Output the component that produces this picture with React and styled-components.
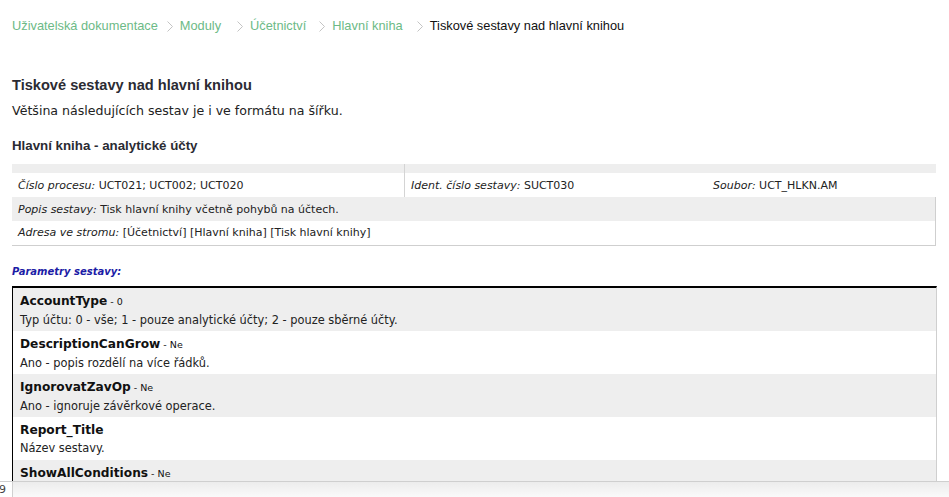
import styled, { createGlobalStyle } from "styled-components";

const GlobalStyle = createGlobalStyle`
  html, body {
    margin: 0;
    padding: 0;
    background: #fff;
  }
  body {
    font-family: "Liberation Sans", Arial, sans-serif;
    color: #222;
  }
`;

const crumbs = [
  { label: "Uživatelská dokumentace", after: 9 },
  { label: "Moduly", after: 16 },
  { label: "Účetnictví", after: 13 },
  { label: "Hlavní kniha", after: 14 },
];

const params = [
  {
    name: "AccountType",
    value: "0",
    text: "Typ účtu: 0 - vše; 1 - pouze analytické účty; 2 - pouze sběrné účty.",
  },
  { name: "DescriptionCanGrow", value: "Ne", text: "Ano - popis rozdělí na více řádků." },
  { name: "IgnorovatZavOp", value: "Ne", text: "Ano - ignoruje závěrkové operace." },
  { name: "Report_Title", value: null, text: "Název sestavy." },
  { name: "ShowAllConditions", value: "Ne", text: "" },
];

export default function App() {
  return (
    <>
      <GlobalStyle />
      <Page>
        <Breadcrumb>
          {crumbs.map((c) => (
            <Crumb key={c.label} $after={c.after}>
              <CrumbLink href="#">{c.label}</CrumbLink>
              <Chevron width="6" height="11" viewBox="0 0 6 11">
                <polyline points="0.5,0.5 5.5,5.5 0.5,10.5" fill="none" stroke="#c4c4c4" strokeWidth="1" />
              </Chevron>
            </Crumb>
          ))}
          <Current>Tiskové sestavy nad hlavní knihou</Current>
        </Breadcrumb>

        <Title>Tiskové sestavy nad hlavní knihou</Title>
        <Lead>Většina následujících sestav je i ve formátu na šířku.</Lead>
        <SubTitle>Hlavní kniha - analytické účty</SubTitle>

        <InfoTable>
          <tbody>
            <InfoRow $gray $thin>
              <InfoCell $divider />
              <InfoCell colSpan={2} />
            </InfoRow>
            <InfoRow>
              <InfoCell $divider $width={380}>
                <Label>Číslo procesu:</Label> UCT021; UCT002; UCT020
              </InfoCell>
              <InfoCell $width={290}>
                <Label>Ident. číslo sestavy:</Label> SUCT030
              </InfoCell>
              <InfoCell>
                <Label>Soubor:</Label> UCT_HLKN.AM
              </InfoCell>
            </InfoRow>
            <InfoRow $gray $bordered>
              <InfoCell colSpan={3}>
                <Label>Popis sestavy:</Label> Tisk hlavní knihy včetně pohybů na účtech.
              </InfoCell>
            </InfoRow>
            <InfoRow $bordered>
              <InfoCell colSpan={3}>
                <Label>Adresa ve stromu:</Label> [Účetnictví] [Hlavní kniha] [Tisk hlavní knihy]
              </InfoCell>
            </InfoRow>
          </tbody>
        </InfoTable>

        <ParamsHeading>Parametry sestavy:</ParamsHeading>

        <ParamList>
          {params.map((p, i) => (
            <Param key={p.name} $gray={i % 2 === 0}>
              <ParamName>
                {p.name}
                {p.value !== null && <ParamValue> - {p.value}</ParamValue>}
              </ParamName>
              <ParamText>{p.text}</ParamText>
            </Param>
          ))}
        </ParamList>
      </Page>

      <Footer>
        <PageNo>9</PageNo>
      </Footer>
    </>
  );
}

const Page = styled.div`
  padding: 17px 13px 40px 12px;
`;

const Breadcrumb = styled.nav`
  display: flex;
  align-items: center;
  font-size: 12.8px;
  line-height: 18px;
  height: 18px;
`;

const Crumb = styled.span`
  display: flex;
  align-items: center;
  margin-right: 7px;

  svg {
    margin-left: ${(p) => p.$after}px;
  }
`;

const CrumbLink = styled.a`
  color: #6cba86;
  text-decoration: none;
`;

const Chevron = styled.svg`
  display: block;
`;

const Current = styled.span`
  color: #111;
`;

const Title = styled.h1`
  margin: 41px 0 0;
  font-size: 14.6px;
  line-height: 18px;
  font-weight: bold;
  color: #2b2b33;
`;

const Lead = styled.p`
  margin: 8px 0 0;
  font-family: "DejaVu Sans", Verdana, sans-serif;
  font-size: 12.6px;
  line-height: 18px;
  color: #222;
`;

const SubTitle = styled.h2`
  margin: 17px 0 0;
  font-size: 13.3px;
  line-height: 18px;
  font-weight: bold;
  color: #2b2b33;
`;

const InfoTable = styled.table`
  margin-top: 9px;
  width: 924px;
  border-collapse: collapse;
  font-family: "DejaVu Sans", Verdana, sans-serif;
  font-size: 11px;
  color: #222;
  border-bottom: 1px solid #cfcfcf;
`;

const InfoRow = styled.tr`
  background: ${(p) => (p.$gray ? "#eeeeee" : "#ffffff")};
  height: ${(p) => (p.$thin ? "9px" : "24px")};

  td:last-child {
    border-right: ${(p) => (p.$bordered ? "1px solid #cfcfcf" : "none")};
  }
`;

const InfoCell = styled.td`
  padding: 0 6px;
  width: ${(p) => (p.$width ? `${p.$width}px` : "auto")};
  border-right: ${(p) => (p.$divider ? "1px solid #d4d4d4" : "none")};
  white-space: nowrap;
  vertical-align: middle;
`;

const Label = styled.i`
  font-style: italic;
`;

const ParamsHeading = styled.div`
  margin-top: 20px;
  font-family: "DejaVu Sans", Verdana, sans-serif;
  font-size: 10px;
  line-height: 12px;
  font-weight: bold;
  font-style: italic;
  color: #1c1ca6;
`;

const ParamList = styled.div`
  margin-top: 8px;
  width: 923px;
  border-top: 2px solid #000;
  border-left: 1px solid #000;
  border-right: 1px solid #cfcfcf;
`;

const Param = styled.div`
  display: flex;
  flex-direction: column;
  height: 43px;
  padding: 3px 7px 0;
  box-sizing: border-box;
  background: ${(p) => (p.$gray ? "#eeeeee" : "#ffffff")};
  font-family: "DejaVu Sans", Verdana, sans-serif;
`;

const ParamName = styled.div`
  font-size: 12.2px;
  line-height: 20px;
  font-weight: bold;
  color: #111;
`;

const ParamValue = styled.span`
  font-size: 9.5px;
  font-weight: normal;
`;

const ParamText = styled.div`
  margin-top: 2px;
  font-size: 11.4px;
  line-height: 13px;
  color: #222;
`;

const Footer = styled.div`
  position: fixed;
  left: 0;
  right: 0;
  bottom: 0;
  height: 15px;
  border-top: 1px solid #cfcfcf;
  background: linear-gradient(#ececec, #fafafa);
`;

const PageNo = styled.div`
  width: 12px;
  height: 100%;
  border-right: 1px solid #d0d0d0;
  background: #fff;
  font-family: "DejaVu Sans", Verdana, sans-serif;
  font-size: 11px;
  line-height: 15px;
  color: #444;
  text-indent: -1px;
  overflow: hidden;
`;
